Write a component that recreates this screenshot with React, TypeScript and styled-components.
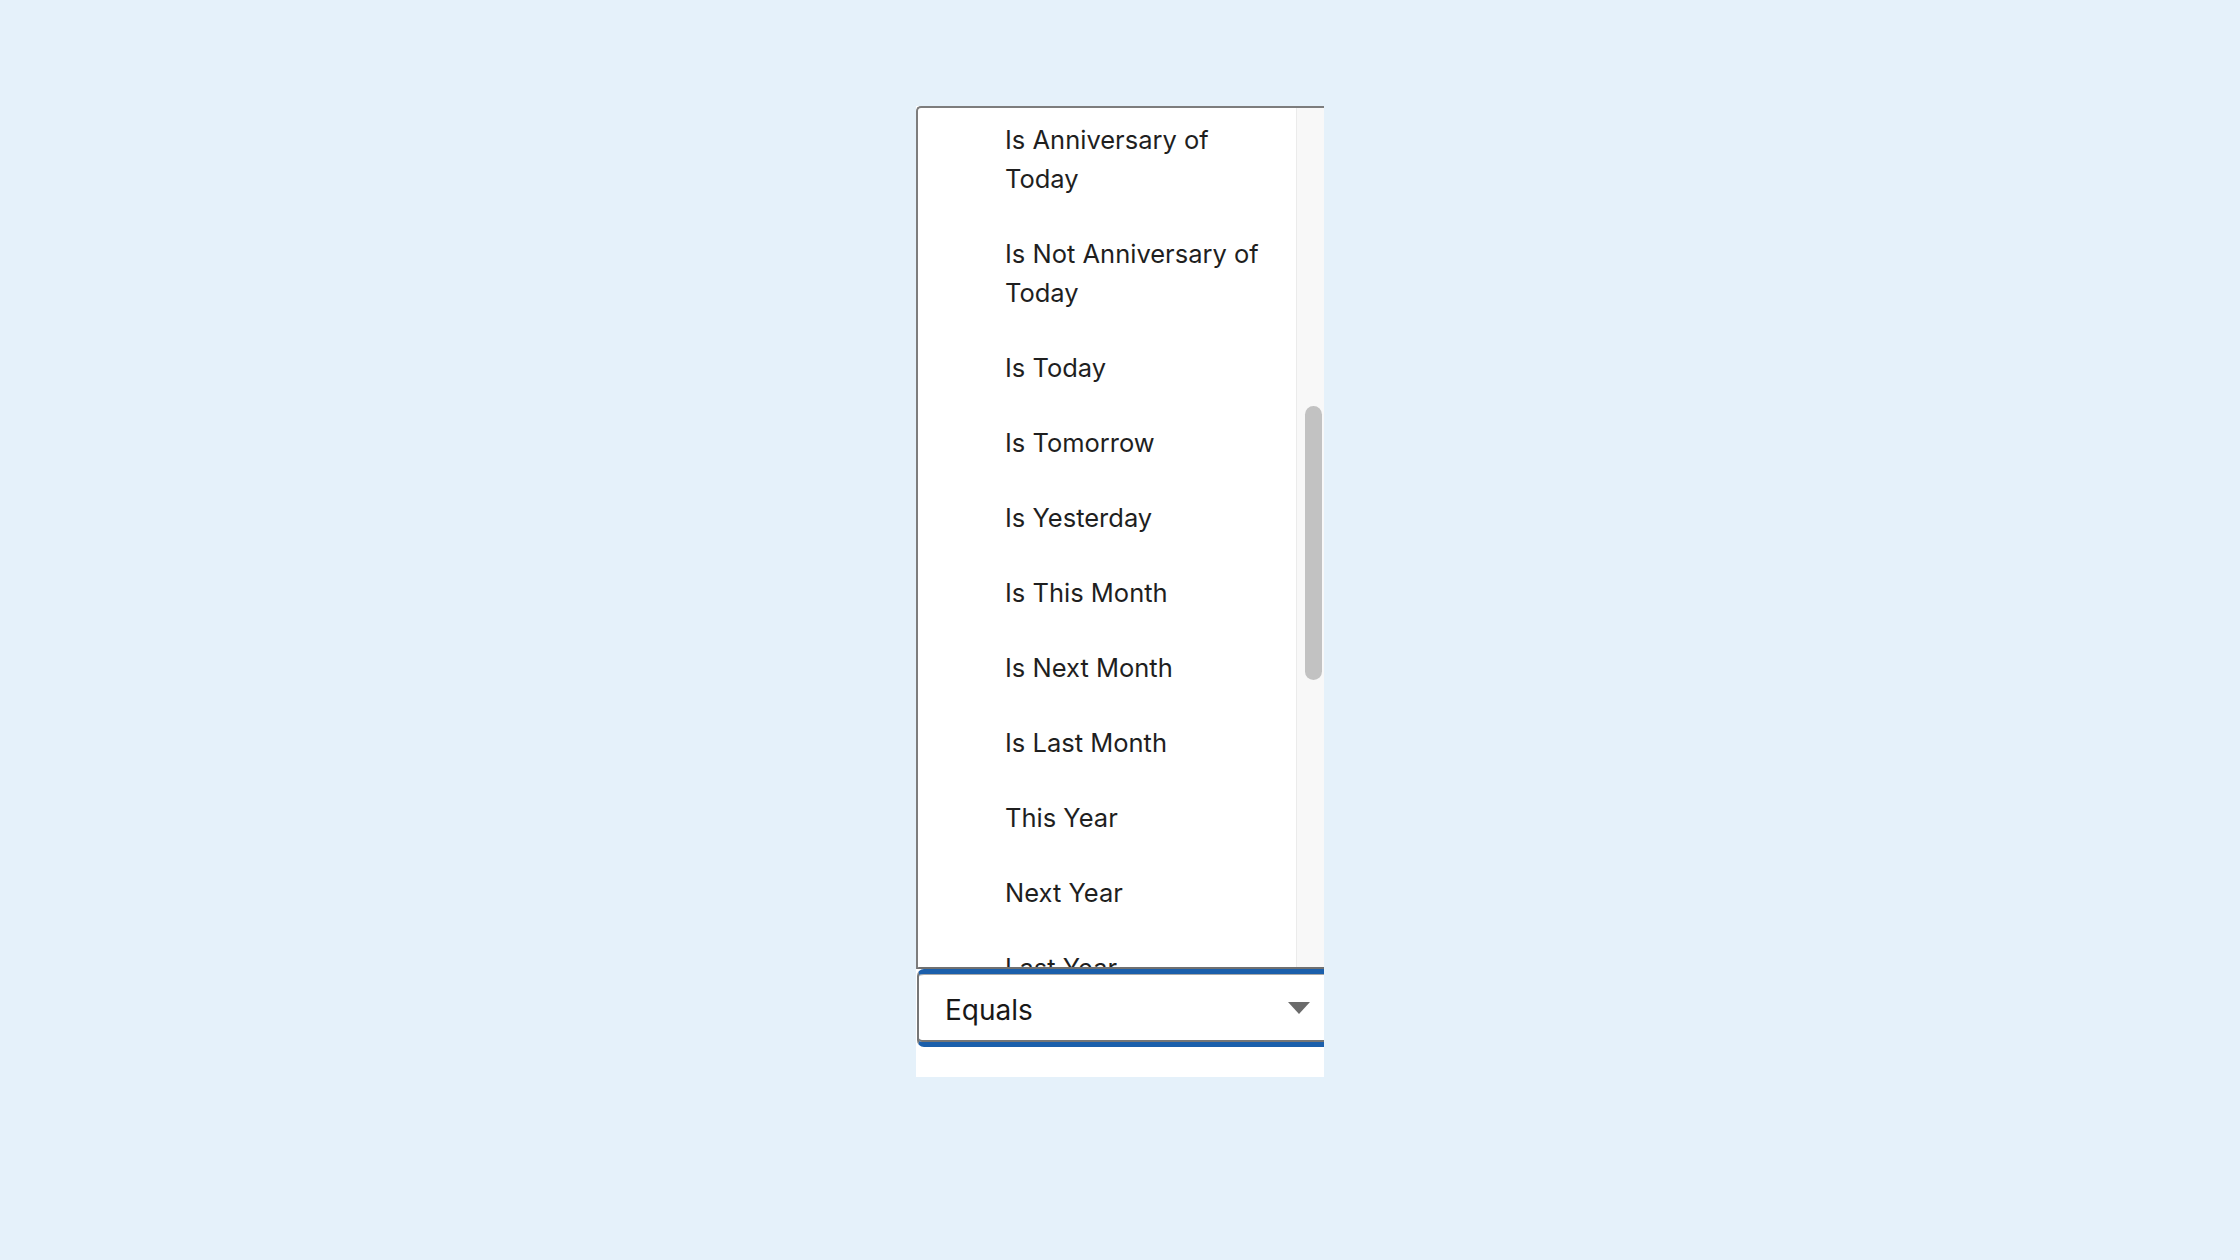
import React from 'react';
import styled, { createGlobalStyle } from 'styled-components';

const operators: string[] = [
  'Is Anniversary of Today',
  'Is Not Anniversary of Today',
  'Is Today',
  'Is Tomorrow',
  'Is Yesterday',
  'Is This Month',
  'Is Next Month',
  'Is Last Month',
  'This Year',
  'Next Year',
  'Last Year',
];

const App: React.FC = (): JSX.Element => {
  return (
    <>
      <GlobalStyle />
      <Page>
        <Frame>
          <Listbox>
            <Options>
              <OptionList>
                {operators.map((label) => (
                  <Option key={label}>{label}</Option>
                ))}
              </OptionList>
            </Options>
            <ScrollTrack>
              <ScrollThumb />
            </ScrollTrack>
          </Listbox>
          <Select>
            <SelectValue>Equals</SelectValue>
            <Caret viewBox="0 0 22 12" aria-hidden="true">
              <path d="M0 0 H22 L11 12 Z" />
            </Caret>
          </Select>
        </Frame>
      </Page>
    </>
  );
};

const GlobalStyle = createGlobalStyle`
  html, body {
    margin: 0;
    padding: 0;
    background: #e5f1fa;
  }
  body {
    font-family: Inter, "Liberation Sans", Arial, sans-serif;
  }
`;

const Page = styled.div`
  width: 2240px;
  height: 1260px;
  display: flex;
  justify-content: center;
  align-items: flex-start;
  padding-top: 106px;
  box-sizing: border-box;
`;

const Frame = styled.div`
  width: 408px;
  height: 971px;
  background: #ffffff;
  display: flex;
  flex-direction: column;
  overflow: hidden;
`;

const Listbox = styled.div`
  height: 863px;
  flex: none;
  display: flex;
  border-top: 2px solid #7d7d7d;
  border-left: 2px solid #7d7d7d;
  border-top-left-radius: 5px;
  box-sizing: border-box;
`;

const Options = styled.div`
  flex: 1;
  overflow: hidden;
`;

const OptionList = styled.ul`
  list-style: none;
  margin: -6px 0 0;
  padding: 0;
`;

const Option = styled.li`
  padding: 18px 26px 18px 87px;
  font-size: 25.5px;
  line-height: 39px;
  color: #1f1f1f;
`;

const ScrollTrack = styled.div`
  width: 28px;
  flex: none;
  background: #f8f8f8;
  border-left: 1px solid #ebebeb;
  box-sizing: border-box;
  padding: 298px 0 0 8px;
`;

const ScrollThumb = styled.div`
  width: 17px;
  height: 274px;
  border-radius: 9px;
  background: #c2c2c2;
`;

const Select = styled.div`
  height: 78px;
  margin-left: 1px;
  flex: none;
  display: flex;
  align-items: center;
  justify-content: space-between;
  padding: 0 14px 0 26px;
  box-sizing: border-box;
  background: #ffffff;
  border-top: 5px solid #1b5fab;
  border-bottom: 5px solid #1b5fab;
  border-left: 2px solid #767676;
  border-radius: 7px 0 0 7px;
  box-shadow: inset 0 -2px 0 #767676, inset 0 1px 0 #a8a8a8;
  position: relative;

  &::before {
    content: '';
    position: absolute;
    left: -2px;
    right: 0;
    top: -7px;
    height: 2px;
    background: #707070;
    border-radius: 3px 0 0 0;
  }
`;

const SelectValue = styled.span`
  margin-top: 4px;
  font-size: 28px;
  line-height: 36px;
  color: #181818;
`;

const Caret = styled.svg`
  width: 22px;
  height: 12px;
  fill: #6b6b6b;
`;

export default App;
